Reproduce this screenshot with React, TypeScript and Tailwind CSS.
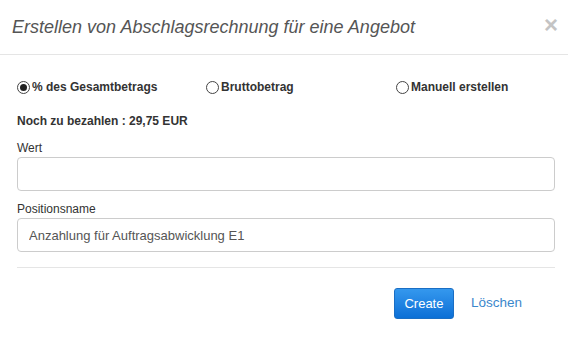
import { useState } from 'react'

type Mode = 'percent' | 'brutto' | 'manual'

function Radio({ checked, label, onClick }: { checked: boolean; label: string; onClick: () => void }) {
  return (
    <button onClick={onClick} className="flex items-center gap-[2px] text-left">
      <span className="w-[13px] h-[13px] rounded-full border border-[#444] bg-white flex items-center justify-center">
        {checked && <span className="w-[7px] h-[7px] rounded-full bg-[#222]" />}
      </span>
      <span className="text-[12px] font-bold text-[#333] leading-4">{label}</span>
    </button>
  )
}

export default function App() {
  const [mode, setMode] = useState<Mode>('percent')
  const [wert, setWert] = useState('')
  const [name, setName] = useState('Anzahlung für Auftragsabwicklung E1')

  return (
    <div className="w-[568px] h-[341px] bg-white font-['Liberation_Sans',Arial,sans-serif] text-[#333]">
      {/* Header */}
      <div className="h-[55px] border-b border-[#e5e5e5] flex items-center justify-between pl-3 pr-[10px]">
        <h4 className="italic text-[18px] text-[#555] leading-5 mt-[-1px]">
          Erstellen von Abschlagsrechnung für eine Angebot
        </h4>
        <button className="text-[24px] font-bold leading-none text-[#c4c4c4] mt-[-5px]">×</button>
      </div>

      {/* Body */}
      <div className="pl-[17px] pr-[13px]">
        <div className="grid grid-cols-[189px_190px_1fr] mt-[24px]">
          <Radio checked={mode === 'percent'} label="% des Gesamtbetrags" onClick={() => setMode('percent')} />
          <Radio checked={mode === 'brutto'} label="Bruttobetrag" onClick={() => setMode('brutto')} />
          <Radio checked={mode === 'manual'} label="Manuell erstellen" onClick={() => setMode('manual')} />
        </div>

        <p className="mt-[18px] text-[12px] font-bold leading-4">Noch zu bezahlen : 29,75 EUR</p>

        <label className="block mt-[11px] text-[12px] leading-4">Wert</label>
        <input
          value={wert}
          onChange={(e) => setWert(e.target.value)}
          className="mt-[1px] w-full h-[34px] border border-[#ccc] rounded-[4px] px-[11px] text-[13px] text-[#555] outline-none"
        />

        <label className="block mt-[10px] text-[12px] leading-4">Positionsname</label>
        <input
          value={name}
          onChange={(e) => setName(e.target.value)}
          className="mt-[1px] w-full h-[34px] border border-[#ccc] rounded-[4px] px-[11px] text-[13px] text-[#555] outline-none"
        />

        <div className="mt-[15px] border-t border-[#e5e5e5]" />

        <div className="mt-[20px] flex items-center justify-end pr-[33px] gap-[17px]">
          <button className="w-[60px] h-[31px] rounded-[3px] border border-[#1a6ec4] bg-gradient-to-b from-[#3498ee] to-[#0a6fd6] text-white text-[13px]">
            Create
          </button>
          <button className="text-[13.5px] text-[#3a87cc]">Löschen</button>
        </div>
      </div>
    </div>
  )
}
